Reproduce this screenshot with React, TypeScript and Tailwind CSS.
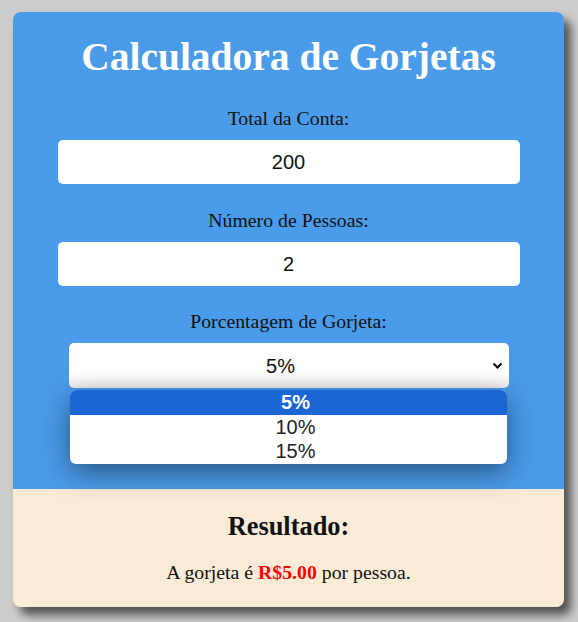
import { useState } from 'react';

const serif = { fontFamily: '"Liberation Serif", "Times New Roman", serif' };
const sans = { fontFamily: '"Liberation Sans", Arial, sans-serif' };

export default function App() {
  const [total, setTotal] = useState('200');
  const [people, setPeople] = useState('2');
  const [tip] = useState(5);
  const options = [5, 10, 15];

  const perPerson = (((Number(total) || 0) * tip) / 100 / (Number(people) || 1)).toFixed(2);

  return (
    <main className="min-h-screen bg-[#cccccc] pt-[12px] pl-[13px]" style={serif}>
      <div className="w-[551px] rounded-lg shadow-[7px_8px_10px_rgba(0,0,0,0.6)]">
        {/* Form area */}
        <section className="relative h-[477px] rounded-t-lg bg-[#4a9be9] pt-[24px] flex flex-col items-center">
          <h1 className="text-[39.5px] leading-[42px] font-bold text-white">Calculadora de Gorjetas</h1>

          <label className="mt-[29px] text-[19.8px] leading-[22px] text-[#111]">Total da Conta:</label>
          <input
            value={total}
            onChange={(e) => setTotal(e.target.value)}
            className="mt-[11px] w-[462px] h-[44px] rounded-[5px] bg-white text-center text-[20px] text-[#111] outline-none"
            style={sans}
          />

          <label className="mt-[25px] text-[19.8px] leading-[22px] text-[#111]">Número de Pessoas:</label>
          <input
            value={people}
            onChange={(e) => setPeople(e.target.value)}
            className="mt-[11px] w-[462px] h-[44px] rounded-[5px] bg-white text-center text-[20px] text-[#111] outline-none"
            style={sans}
          />

          <label className="mt-[24px] text-[19.8px] leading-[22px] text-[#111]">Porcentagem de Gorjeta:</label>
          <div
            className="relative mt-[11px] w-[440px] h-[45px] pr-[16px] rounded-[5px] bg-gradient-to-b from-white from-70% to-[#ececec] flex items-center justify-center text-[20px] text-[#111]"
            style={sans}
          >
            {tip}%
            <svg className="absolute right-[6px] top-[19px] w-[11px] h-[8px]" viewBox="0 0 11 8">
              <path d="M1.5 1.5 L5.5 5.5 L9.5 1.5" fill="none" stroke="#111" strokeWidth="2.2" />
            </svg>
          </div>

          {/* Open dropdown list */}
          <ul
            className="absolute left-[57px] top-[378px] w-[437px] rounded-[6px] overflow-hidden bg-white shadow-[0_8px_28px_rgba(0,0,0,0.45)] text-[20px] leading-[24.5px] text-[#222]"
            style={sans}
          >
            {options.map((o) => (
              <li
                key={o}
                className={`pl-[14px] text-center ${o === tip ? 'bg-[#1a66d2] text-white font-bold' : ''}`}
              >
                {o}%
              </li>
            ))}
          </ul>
        </section>

        {/* Result */}
        <section className="h-[118px] rounded-b-lg bg-[#faebd7] pt-[22px] flex flex-col items-center">
          <h3 className="text-[26.4px] leading-[30px] font-bold text-[#111]">Resultado:</h3>
          <p className="mt-[20px] text-[19.8px] leading-[23px] text-[#111]">
            A gorjeta é <span className="font-bold text-[#ff0000]">R${perPerson}</span> por pessoa.
          </p>
        </section>
      </div>
    </main>
  );
}
